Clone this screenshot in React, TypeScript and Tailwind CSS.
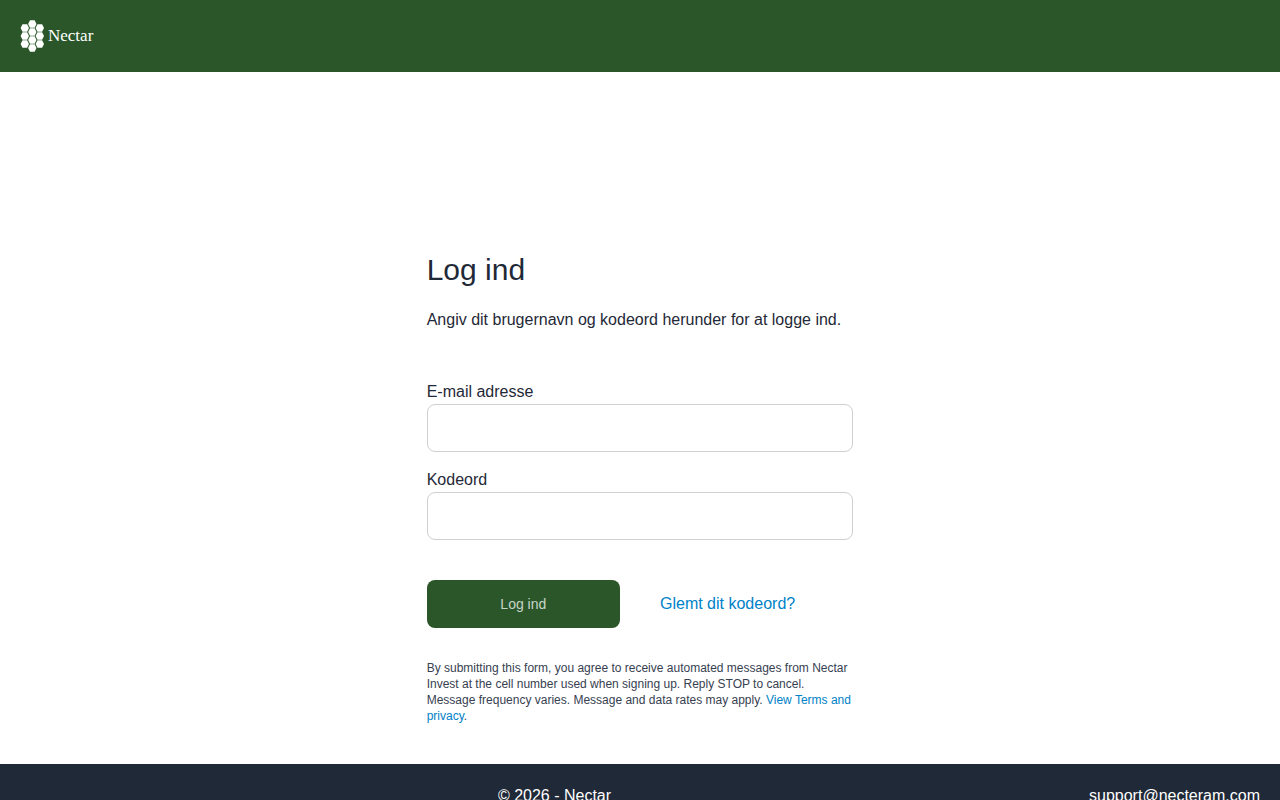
import React from "react";

const hexCells = [
  [4.8, 8],
  [4.8, 16],
  [4.8, 24],
  [12.3, 4],
  [12.3, 12],
  [12.3, 20],
  [12.3, 28],
  [19.8, 8],
  [19.8, 16],
  [19.8, 24],
];

function Logo() {
  return (
    <a href="/" className="flex items-center gap-1 text-white">
      <svg width="24" height="32" viewBox="0 0 24 32" aria-hidden="true">
        {hexCells.map(([x, y]) => (
          <polygon
            key={`${x}-${y}`}
            points="-4.2,0 -2.3,-3.7 2.3,-3.7 4.2,0 2.3,3.7 -2.3,3.7"
            transform={`translate(${x} ${y})`}
            fill="#fff"
          />
        ))}
      </svg>
      <span className="font-['Liberation_Serif',serif] text-[17px] leading-8">
        Nectar
      </span>
    </a>
  );
}

function Field({
  id,
  label,
  type,
}: {
  id: string;
  label: string;
  type: string;
}) {
  return (
    <div className="flex flex-col">
      <label htmlFor={id}>{label}</label>
      <input
        id={id}
        type={type}
        className="h-12 w-full rounded-lg border border-[#d0d0d0] bg-white px-3"
      />
    </div>
  );
}

export default function App() {
  return (
    <div className="flex min-h-screen flex-col bg-white font-['Liberation_Sans',Arial,sans-serif] text-base text-[#1f2937]">
      <header className="flex items-center bg-[#2a562a] p-5">
        <Logo />
      </header>

      <main className="mx-auto w-full grow px-5 pt-45 pb-10 md:w-1/3 md:px-0">
        <h1 className="text-3xl leading-9">Log ind</h1>
        <p className="mt-5">
          Angiv dit brugernavn og kodeord herunder for at logge ind.
        </p>

        <form className="mt-12" onSubmit={(e) => e.preventDefault()}>
          <div className="flex flex-col gap-4">
            <Field id="email" label="E-mail adresse" type="email" />
            <Field id="password" label="Kodeord" type="password" />
          </div>

          <div className="mt-10 grid grid-cols-2 items-center gap-10">
            <button
              type="submit"
              className="h-12 rounded-lg bg-[#2a562a] text-sm text-white/75"
            >
              Log ind
            </button>
            <a href="#forgot" className="text-[#0082c8]">
              Glemt dit kodeord?
            </a>
          </div>
        </form>

        <p className="mt-8 text-xs text-[#374151]">
          By submitting this form, you agree to receive automated messages from
          Nectar Invest at the cell number used when signing up. Reply STOP to
          cancel.
          <br />
          Message frequency varies. Message and data rates may apply.{" "}
          <a href="#terms" className="text-[#0082c8]">
            View Terms and privacy
          </a>
          .
        </p>
      </main>

      <footer className="flex justify-between bg-[#1f2937] p-5 text-white">
        <div />
        <div>© 2026 - Nectar</div>
        <a href="mailto:support@necteram.com">support@necteram.com</a>
      </footer>
    </div>
  );
}
